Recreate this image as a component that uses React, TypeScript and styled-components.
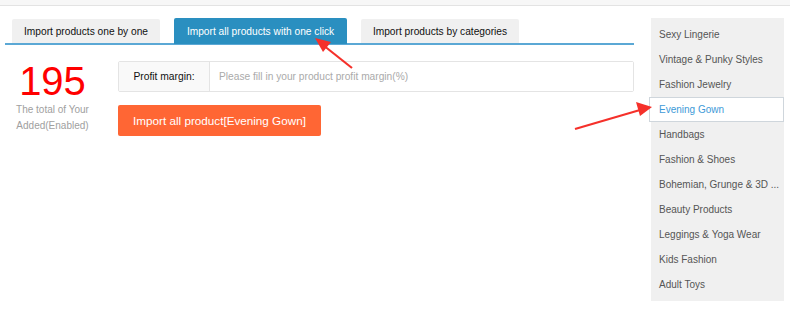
import styled, { createGlobalStyle } from "styled-components";

const GlobalStyle = createGlobalStyle`
  html, body {
    margin: 0;
    padding: 0;
    background: #ffffff;
    font-family: "Liberation Sans", Arial, sans-serif;
  }
`;

const tabs = [
  { label: "Import products one by one", width: 148 },
  { label: "Import all products with one click", width: 173, active: true },
  { label: "Import products by categories", width: 158 },
];

const categories = [
  "Sexy Lingerie",
  "Vintage & Punky Styles",
  "Fashion Jewelry",
  "Evening Gown",
  "Handbags",
  "Fashion & Shoes",
  "Bohemian, Grunge & 3D ...",
  "Beauty Products",
  "Leggings & Yoga Wear",
  "Kids Fashion",
  "Adult Toys",
];

const App = () => {
  return (
    <Page>
      <GlobalStyle />
      <TopBar />
      <Main>
        <Content>
          <TabRow>
            {tabs.map((t) => (
              <Tab key={t.label} $active={t.active} $width={t.width}>
                {t.label}
              </Tab>
            ))}
          </TabRow>
          <Body>
            <Counter>
              <Count>195</Count>
              <CountLabel>
                The total of Your
                <br />
                Added(Enabled)
              </CountLabel>
            </Counter>
            <Form>
              <InputGroup>
                <InputLabel>Profit margin:</InputLabel>
                <Input placeholder="Please fill in your product profit margin(%)" />
              </InputGroup>
              <ImportButton>Import all product[Evening Gown]</ImportButton>
            </Form>
          </Body>
        </Content>
        <Sidebar>
          {categories.map((c) => (
            <Category key={c} $active={c === "Evening Gown"}>
              {c}
            </Category>
          ))}
        </Sidebar>
      </Main>
      <Arrows width="790" height="317" viewBox="0 0 790 317">
        <line x1="352" y1="68" x2="323" y2="45" stroke="#f5302a" strokeWidth="2.2" />
        <polygon points="315,38 331,42 323,52" fill="#f5302a" />
        <line x1="575" y1="129" x2="640" y2="110" stroke="#f5302a" strokeWidth="2.2" />
        <polygon points="652,107 636,102 640,116" fill="#f5302a" />
      </Arrows>
    </Page>
  );
};

const Page = styled.div`
  position: relative;
  width: 790px;
  height: 317px;
  overflow: hidden;
`;

const TopBar = styled.div`
  height: 5px;
  background: #f7f7f7;
  border-bottom: 1px solid #e3e3e3;
`;

const Main = styled.div`
  display: flex;
  align-items: flex-start;
  padding-top: 12px;
`;

const Content = styled.div`
  width: 629px;
  margin-left: 5px;
`;

const TabRow = styled.div`
  display: flex;
  gap: 14px;
  padding-left: 7px;
  border-bottom: 2px solid #5ba8d5;
  height: 25px;
  align-items: flex-end;
`;

const Tab = styled.div<{ $active?: boolean; $width: number }>`
  width: ${(p) => p.$width}px;
  height: ${(p) => (p.$active ? 26 : 24)}px;
  margin-bottom: ${(p) => (p.$active ? -1 : 0)}px;
  display: flex;
  align-items: center;
  justify-content: center;
  font-size: 10.2px;
  white-space: nowrap;
  background: ${(p) => (p.$active ? "#2a8fc0" : "#f0f0f0")};
  color: ${(p) => (p.$active ? "#ffffff" : "#111111")};
  border-radius: 2px 2px 0 0;
`;

const Body = styled.div`
  display: flex;
  padding-top: 16px;
`;

const Counter = styled.div`
  width: 95px;
  display: flex;
  flex-direction: column;
  align-items: center;
`;

const Count = styled.div`
  font-size: 40px;
  line-height: 36px;
  color: #ff0000;
  margin-top: 2px;
`;

const CountLabel = styled.div`
  font-size: 10px;
  line-height: 16px;
  color: #a0a0a0;
  text-align: center;
  margin-top: 3px;
`;

const Form = styled.div`
  flex: 1;
  margin-left: 18px;
  display: flex;
  flex-direction: column;
  align-items: flex-start;
`;

const InputGroup = styled.div`
  display: flex;
  width: 100%;
  height: 31px;
  box-sizing: border-box;
  border: 1px solid #e4e4e4;
  border-radius: 2px;
`;

const InputLabel = styled.div`
  width: 90px;
  display: flex;
  align-items: center;
  justify-content: center;
  font-size: 10.3px;
  color: #111111;
  background: #f9f9f9;
  border-right: 1px solid #e4e4e4;
`;

const Input = styled.input`
  flex: 1;
  border: none;
  outline: none;
  padding: 0 9px;
  font-family: "Liberation Sans", Arial, sans-serif;
  font-size: 10.2px;
  color: #333333;
  background: #ffffff;
  &::placeholder {
    color: #aaaaaa;
  }
`;

const ImportButton = styled.button`
  margin-top: 13px;
  width: 203px;
  height: 31px;
  border: none;
  border-radius: 2px;
  background: #ff6634;
  color: #ffffff;
  font-family: "Liberation Sans", Arial, sans-serif;
  font-size: 11.7px;
  white-space: nowrap;
  padding: 0;
`;

const Sidebar = styled.div`
  width: 133px;
  margin-left: 17px;
  background: #f0f0f0;
  padding: 4px 0 4px;
  display: flex;
  flex-direction: column;
`;

const Category = styled.div<{ $active?: boolean }>`
  height: 25px;
  box-sizing: border-box;
  display: flex;
  align-items: center;
  padding-left: ${(p) => (p.$active ? 9 : 8)}px;
  margin-left: ${(p) => (p.$active ? -2 : 0)}px;
  font-size: 10px;
  white-space: nowrap;
  overflow: hidden;
  color: ${(p) => (p.$active ? "#3d9ad8" : "#555555")};
  background: ${(p) => (p.$active ? "#ffffff" : "transparent")};
  border: ${(p) => (p.$active ? "1px solid #cfd6dc" : "none")};
`;

const Arrows = styled.svg`
  position: absolute;
  left: 0;
  top: 0;
  pointer-events: none;
`;

export default App;
